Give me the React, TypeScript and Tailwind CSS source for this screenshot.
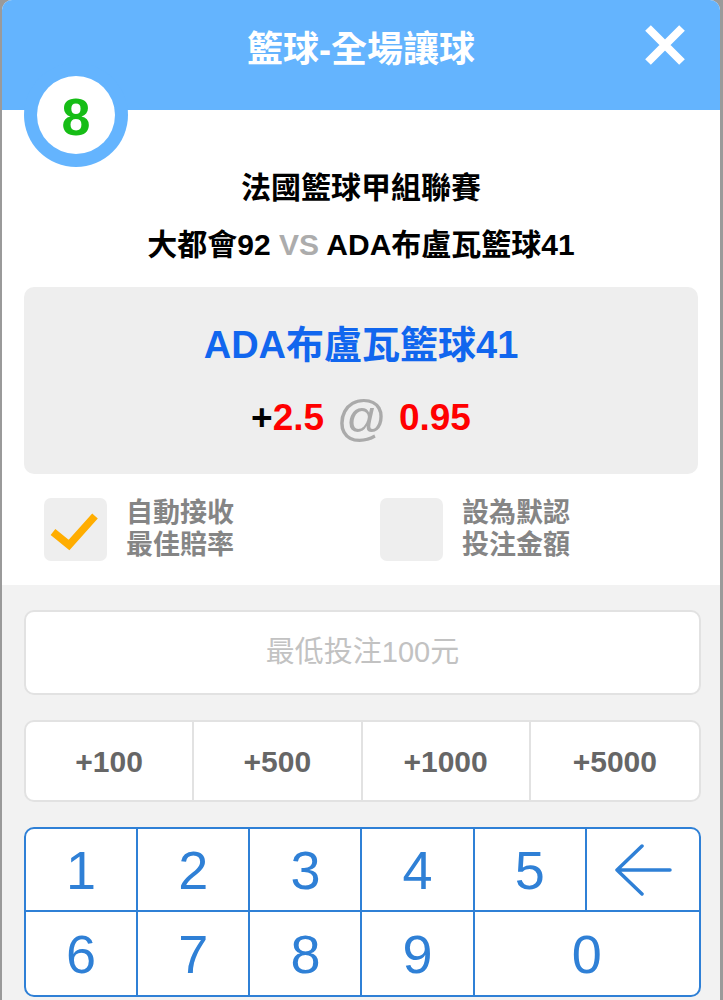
import { Fragment } from "react";

const amounts = ["+100", "+500", "+1000", "+5000"];

function CheckBox({ checked, lines }: { checked?: boolean; lines: string[] }) {
  return (
    <div className="flex w-[336px] items-center gap-[19px]">
      <div className="flex h-[63px] w-[63px] items-center justify-center rounded-[7px] bg-[#eeeeee]">
        {checked && (
          <svg width="63" height="63" viewBox="0 0 63 63">
            <polyline
              points="9,34 25,47 51,18"
              fill="none"
              stroke="#ffad00"
              strokeWidth="7.5"
            />
          </svg>
        )}
      </div>
      <div className="text-[27px] leading-[32px] font-bold text-[#858585]">
        {lines.map((l) => (
          <div key={l}>{l}</div>
        ))}
      </div>
    </div>
  );
}

function Key({ label, className }: { label: React.ReactNode; className: string }) {
  return (
    <div
      className={`flex items-center justify-center border-[#2f80d6] text-[54px] leading-none text-[#2f80d6] ${className}`}
    >
      {label}
    </div>
  );
}

const BackArrow = (
  <svg width="60" height="52" viewBox="0 0 60 52">
    <path
      d="M4 26 H57 M29 2 L4 26 L29 50"
      fill="none"
      stroke="#2f80d6"
      strokeWidth="3.5"
      strokeLinecap="round"
      strokeLinejoin="round"
    />
  </svg>
);

export default function App() {
  return (
    <div className="h-[1000px] w-[723px] overflow-hidden bg-[#9a9a9a] pl-[2px] pr-[3px] font-['Liberation_Sans','Noto_Sans_CJK_TC',sans-serif]">
      <div className="relative h-full overflow-hidden rounded-t-[10px] bg-white">
        {/* header */}
        <div className="relative flex h-[110px] justify-center bg-[#64b4fe] pt-[30px]">
          <h1 className="text-[36px] leading-[40px] font-bold text-white">籃球-全場讓球</h1>
          <svg
            className="absolute top-[25px] right-[35px]"
            width="40"
            height="40"
            viewBox="0 0 40 40"
          >
            <path d="M3 3 L37 37 M37 3 L3 37" stroke="white" strokeWidth="8" />
          </svg>
        </div>

        {/* badge */}
        <div className="absolute top-[63px] left-[22px] flex h-[104px] w-[104px] items-center justify-center rounded-full bg-[#64b4fe]">
          <div className="flex h-[78px] w-[78px] items-center justify-center rounded-full bg-white pt-[4px] text-[52px] leading-none font-bold text-[#16bd16]">
            8
          </div>
        </div>

        {/* match info */}
        <div className="flex flex-col items-center pt-[60px]">
          <div className="text-[30px] leading-[36px] font-bold text-black">法國籃球甲組聯賽</div>
          <div className="mt-[21px] text-[30px] leading-[36px] font-bold text-black">
            大都會92 <span className="text-[#acacac]">VS</span> ADA布盧瓦籃球41
          </div>
        </div>

        <div className="mx-[22px] mt-[24px] flex h-[187px] flex-col items-center rounded-[10px] bg-[#eeeeee] pt-[36px]">
          <div className="text-[38px] leading-[44px] font-bold text-[#1166ee]">ADA布盧瓦籃球41</div>
          <div className="mt-[27px] flex h-[48px] items-center text-[37px] font-bold">
            <span className="text-black">+</span>
            <span className="text-[#ff0000]">2.5</span>
            <span className="mx-[12px] text-[50px] font-normal text-[#aaaaaa]">@</span>
            <span className="text-[#ff0000]">0.95</span>
          </div>
        </div>

        <div className="flex pt-[23px] pb-[24px] pl-[42px]">
          <CheckBox checked lines={["自動接收", "最佳賠率"]} />
          <CheckBox lines={["設為默認", "投注金額"]} />
        </div>

        {/* stake area */}
        <div className="flex h-full flex-col gap-[25px] bg-[#f2f2f2] pt-[25px] pr-[19px] pl-[22px]">
          <div className="flex h-[85px] items-center justify-center rounded-[10px] border-2 border-[#e2e2e2] bg-white text-[29px] text-[#c2c2c2]">
            最低投注100元
          </div>

          <div className="grid h-[82px] grid-cols-4 divide-x-2 divide-[#e2e2e2] overflow-hidden rounded-[10px] border-2 border-[#e2e2e2] bg-white">
            {amounts.map((a) => (
              <div key={a} className="flex items-center justify-center text-[30px] font-bold text-[#666666]">
                {a}
              </div>
            ))}
          </div>

          <div className="grid h-[170px] grid-cols-6 grid-rows-2 overflow-hidden rounded-[10px] border-2 border-[#2f80d6] bg-white">
            {["1", "2", "3", "4", "5"].map((d) => (
              <Key key={d} label={d} className="border-r-2 border-b-2" />
            ))}
            <Key label={BackArrow} className="border-b-2" />
            {["6", "7", "8", "9"].map((d) => (
              <Fragment key={d}>
                <Key label={d} className="border-r-2" />
              </Fragment>
            ))}
            <Key label="0" className="col-span-2" />
          </div>
        </div>
      </div>
    </div>
  );
}
